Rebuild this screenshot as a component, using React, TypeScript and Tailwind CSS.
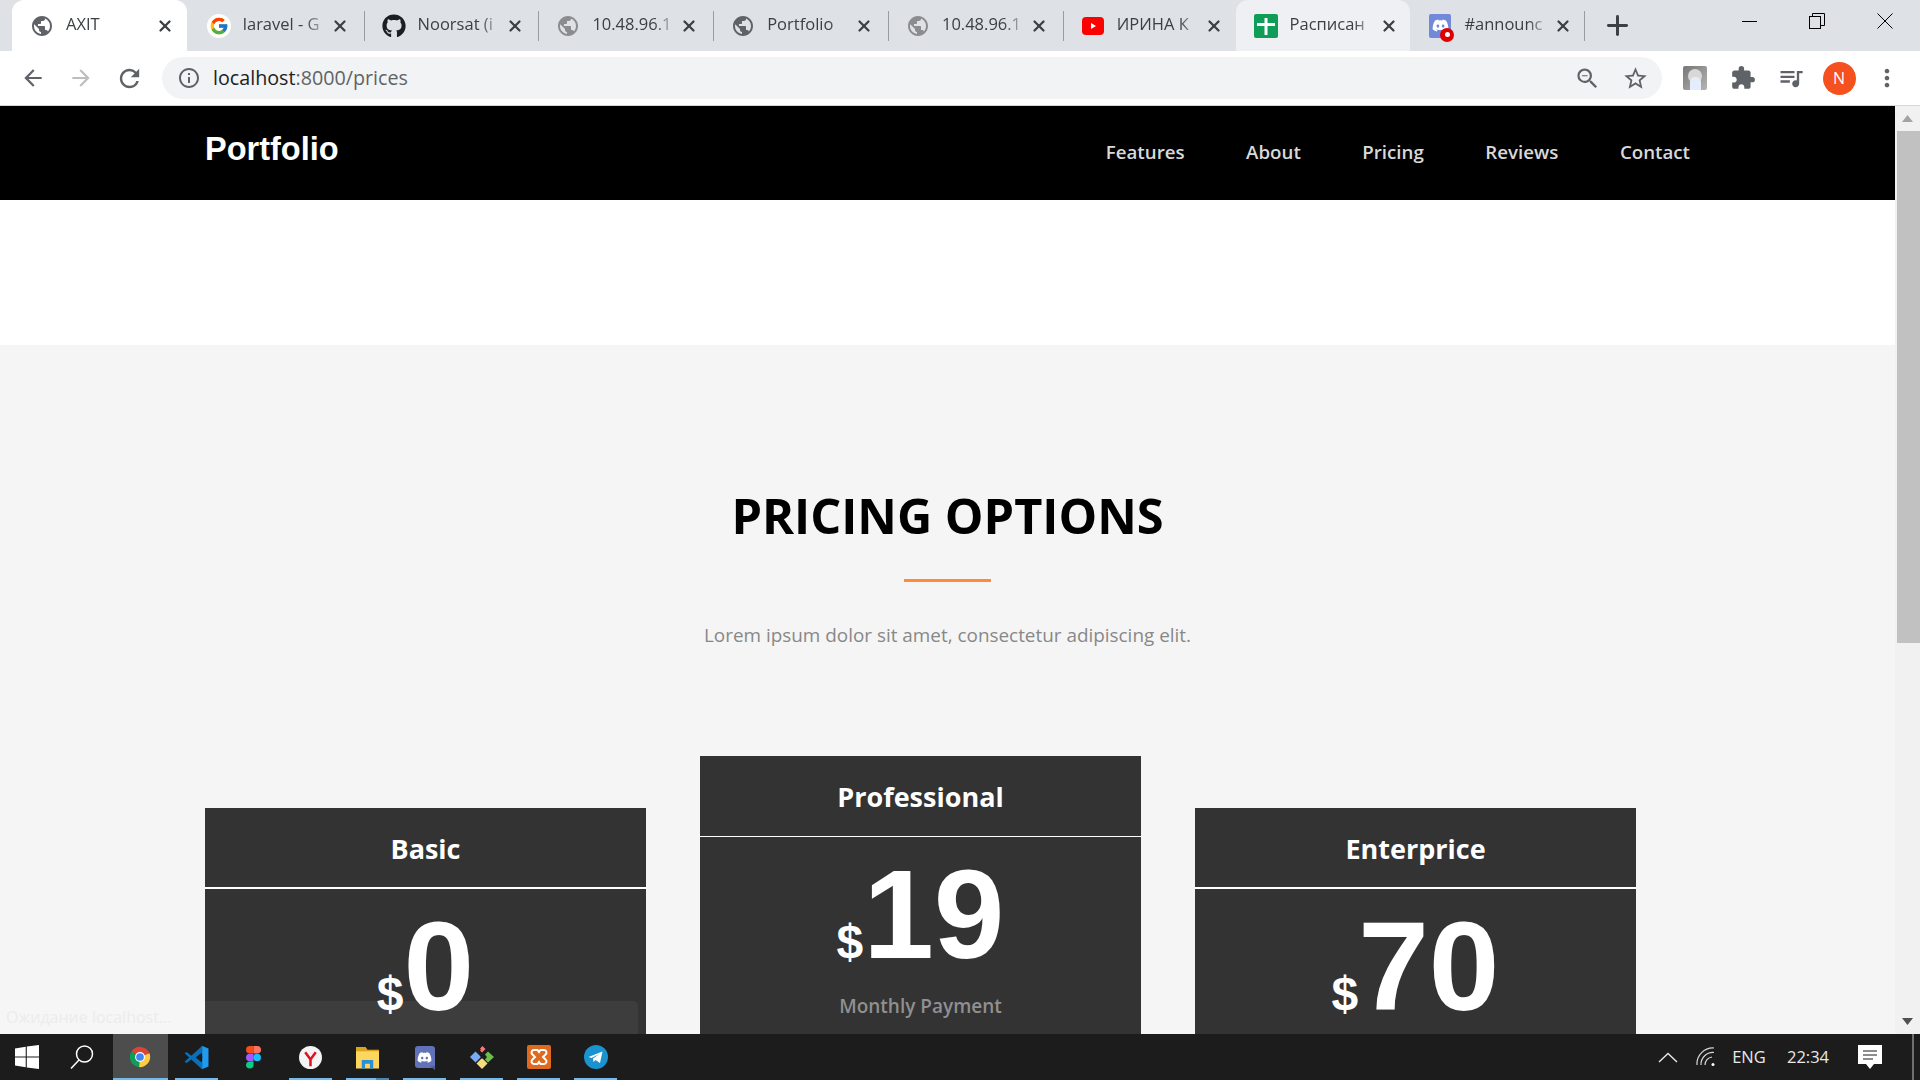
import React from 'react';
import { FaDiscord, FaGithub } from 'react-icons/fa';
import { FcGoogle } from 'react-icons/fc';
import {
  MdArrowBack,
  MdArrowForward,
  MdExtension,
  MdInfoOutline,
  MdMoreVert,
  MdPublic,
  MdQueueMusic,
  MdRefresh,
  MdStarBorder,
  MdZoomOut,
} from 'react-icons/md';
import { Plus, X } from 'lucide-react';

const ui = "font-['Open_Sans',sans-serif]";
const arial = "font-['Liberation_Sans',Arial,sans-serif]";

function YoutubeIcon() {
  return (
    <svg width="22" height="20" viewBox="0 0 22 20">
      <rect x="0" y="1" width="22" height="18" rx="4" fill="#ff0000" />
      <path d="M9 7l5 3-5 3z" fill="#fff" />
    </svg>
  );
}

function SheetsIcon() {
  return (
    <svg width="24" height="24" viewBox="0 0 24 24">
      <rect width="24" height="24" rx="2" fill="#0f9d58" />
      <path d="M3 9h18v3H3zM10.5 4h3v17h-3z" fill="#fff" />
    </svg>
  );
}

function DiscordTabIcon() {
  return (
    <span className="relative flex h-[24px] w-[22px] items-center justify-center rounded-[2px] bg-[#7289da]">
      <FaDiscord size={17} color="#fff" />
      <span className="absolute -bottom-[4px] -right-[3px] flex h-[14px] w-[14px] items-center justify-center rounded-full bg-[#e00000]">
        <span className="h-[5px] w-[5px] rounded-full bg-white" />
      </span>
    </span>
  );
}

function ChromeIcon() {
  return (
    <svg width="22" height="22" viewBox="0 0 24 24" className="mr-[1px]">
      <path d="M12 12L2.8 6A11 11 0 0 1 22.3 8z" fill="#db4437" />
      <path d="M12 12L2.8 6A11 11 0 0 0 11 23z" fill="#0f9d58" />
      <path d="M12 12L22.3 8A11 11 0 0 1 11 23z" fill="#ffcd40" />
      <circle cx="12" cy="12" r="5.4" fill="#fff" />
      <circle cx="12" cy="12" r="4.2" fill="#4285f4" />
    </svg>
  );
}

function VscodeIcon() {
  return (
    <svg width="25" height="25" viewBox="0 0 24 24">
      <path d="M17 0.8L23.5 3.4V20.6L17 23.2L17.6 12z" fill="#1f9cf0" />
      <path d="M17.6 0.6L7 10.2L2.6 6.8L0.5 7.9L5 12L0.5 16.1L2.6 17.2L7 13.8L17.6 23.4L17.8 17.2L11.2 12L17.8 6.8z" fill="#0a6fb8" />
    </svg>
  );
}

function FigmaIcon() {
  return (
    <svg width="15" height="23" viewBox="0 0 15 23">
      <path d="M0 3.8A3.8 3.8 0 0 1 3.8 0H7.5V7.6H3.8A3.8 3.8 0 0 1 0 3.8z" fill="#f24e1e" />
      <path d="M7.5 0H11.2A3.8 3.8 0 0 1 11.2 7.6H7.5z" fill="#ff7262" />
      <path d="M0 11.5A3.8 3.8 0 0 1 3.8 7.7H7.5V15.3H3.8A3.8 3.8 0 0 1 0 11.5z" fill="#a259ff" />
      <circle cx="11.2" cy="11.5" r="3.8" fill="#1abcfe" />
      <path d="M0 19.2A3.8 3.8 0 0 1 3.8 15.4H7.5V19.2A3.8 3.8 0 0 1 0 19.2z" fill="#0acf83" />
    </svg>
  );
}

function YandexIcon() {
  return (
    <svg width="23" height="23" viewBox="0 0 24 24">
      <circle cx="12" cy="12" r="12" fill="#f4f4f4" />
      <path d="M6.5 6.5l5.5 7.5 5.5-7.5M12 14v7" fill="none" stroke="#e3101a" strokeWidth="2.6" />
    </svg>
  );
}

function FilesIcon() {
  return (
    <svg width="23" height="23" viewBox="0 0 24 24">
      <path d="M0 1h10l2 3h12v4H0z" fill="#d9a520" />
      <rect y="5.5" width="24" height="18" fill="#fbd760" />
      <path d="M6 23.5v-9h12v9h-3.500v-5h-5v5z" fill="#2a8fd8" />
    </svg>
  );
}

function DiscordAppIcon() {
  return (
    <span className="relative flex h-[22px] w-[20px] items-center justify-center rounded-[3px] bg-[#6272b8]">
      <FaDiscord size={15} color="#fff" />
      <span className="absolute -bottom-[2px] right-0 h-0 w-0 border-l-[5px] border-t-[4px] border-l-transparent border-t-[#4f5d9e]" />
    </span>
  );
}

function GitIcon() {
  return (
    <svg width="24" height="24" viewBox="0 0 24 24">
      <path d="M5.500 6.500L11 12l-5.500 5.500L0 12z" fill="#79aaf5" />
      <path d="M12.500 1l3 3-3.500 3.500L10 5.500l1-1-1-1z" fill="#f47a7a" />
      <path d="M18 6.500L24 12l-6 5.500-3-3 2-2.500-2-2.500z" fill="#6cc04a" />
      <path d="M12 13l5.500 5.500L12 24l-5.500-5.500z" fill="#f6dc7c" />
      <circle cx="12" cy="12" r="1.500" fill="#1c1c1c" />
    </svg>
  );
}

function XamppIcon() {
  return (
    <svg width="24" height="24" viewBox="0 0 24 24">
      <rect width="24" height="24" rx="2" fill="#dd6a1f" />
      <path d="M7 5h3.500L12 7l1.500-2H17a2.500 2.500 0 0 1 1.500 4.500L16 12l2.500 2.500A2.500 2.500 0 0 1 17 19h-3.500L12 17l-1.500 2H7a2.500 2.500 0 0 1-1.500-4.500L8 12 5.500 9.500A2.500 2.500 0 0 1 7 5z" fill="none" stroke="#fff" strokeWidth="2" />
    </svg>
  );
}

function TelegramIcon() {
  return (
    <svg width="24" height="24" viewBox="0 0 24 24">
      <circle cx="12" cy="12" r="12" fill="#1b93cf" />
      <path d="M4.500 12L18.500 6.500L16 18L11.500 15L9.500 17L9 13.500L15.500 9L7.500 13z" fill="#fff" />
    </svg>
  );
}

const tabs = [
  { title: 'AXIT', icon: <MdPublic size={24} color="#5f6368" />, active: true },
  { title: 'laravel - G', icon: <span className="flex h-[24px] w-[24px] items-center justify-center rounded-full bg-white"><FcGoogle size={20} /></span>, sep: true, nudge: true },
  { title: 'Noorsat (i', icon: <FaGithub size={24} color="#1b1f23" />, sep: true, nudge: true },
  { title: '10.48.96.1', icon: <MdPublic size={24} color="#8a8c8f" />, sep: true, nudge: true },
  { title: 'Portfolio', icon: <MdPublic size={24} color="#5f6368" />, sep: true, nudge: true },
  { title: '10.48.96.1', icon: <MdPublic size={24} color="#8a8c8f" />, sep: true, nudge: true },
  { title: 'ИРИНА К', icon: <YoutubeIcon />, nudge: true },
  { title: 'Расписан', icon: <SheetsIcon />, hovered: true },
  { title: '#announc', icon: <DiscordTabIcon />, sep: true },
];

const apps = [
  { icon: <VscodeIcon />, line: true },
  { icon: <FigmaIcon /> },
  { icon: <YandexIcon />, line: true },
  { icon: <FilesIcon />, line: true, double: true },
  { icon: <DiscordAppIcon />, line: true },
  { icon: <GitIcon />, line: true },
  { icon: <XamppIcon />, line: true },
  { icon: <TelegramIcon />, line: true },
];

const navLinks = ['Features', 'About', 'Pricing', 'Reviews', 'Contact'];

function PriceCard({ name, price, featured }: { name: string; price: string; featured?: boolean }) {
  return (
    <div className={`w-[441px] bg-[#333333] pb-[60px] text-center text-white ${featured ? '' : 'mt-[52px]'}`}>
      <h3 className={`flex h-[81px] items-center justify-center border-white text-[27px] font-bold ${featured ? 'border-b pt-[2px]' : 'border-b-2 pt-[3px]'}`}>
        {name}
      </h3>
      <div className={`flex items-baseline justify-center pt-[14px] font-bold leading-none ${arial}`}>
        <span className="text-[48px]">$</span>
        <span className="text-[127px]">{price}</span>
      </div>
      <p className="mt-[14px] text-[19px] font-semibold leading-[28px] text-[#909090]">Monthly Payment</p>
    </div>
  );
}

export default function App() {
  return (
    <div className={`flex h-screen w-full flex-col overflow-hidden bg-white ${ui}`}>
      {/* tab strip */}
      <div className="flex h-[51px] shrink-0 items-stretch bg-[#dee1e6] pl-[12px]">
        {tabs.map((t, i) => (
          <div
            key={i}
            className={`relative flex w-[174.8px] items-center ${t.nudge ? 'pl-[20px]' : 'pl-[18px]'} ${
              t.active ? 'rounded-t-[12px] bg-white' : t.hovered ? 'rounded-t-[12px] bg-[#eef0f3]' : ''
            }`}
          >
            <span className="flex w-[24px] shrink-0 items-center justify-center">{t.icon}</span>
            <span
              className={`ml-[12px] -mt-[2px] overflow-hidden whitespace-nowrap text-[16.5px] text-[#3c4043] [mask-image:linear-gradient(to_right,black_72%,transparent)] ${
                t.nudge ? 'w-[86px]' : 'w-[88px]'
              }`}
            >
              {t.title}
            </span>
            <X size={18} strokeWidth={3} className="ml-[2px] shrink-0 text-[#3c4043]" />
            {t.sep && (
              <span
                className={`absolute top-[11px] h-[30px] w-[1px] bg-[#9a9ca0] ${i === tabs.length - 1 ? 'right-0' : '-right-[3px]'}`}
              />
            )}
          </div>
        ))}
        <div className="ml-[17px] flex items-center">
          <Plus size={31} strokeWidth={2.3} className="text-[#3c4043]" />
        </div>
        <div className="ml-auto flex items-start pr-[2px]">
          <div className="flex h-[42px] w-[68px] items-center justify-center">
            <span className="h-[1px] w-[15px] bg-black" />
          </div>
          <div className="flex h-[42px] w-[68px] items-center justify-center">
            <svg width="16" height="16" viewBox="0 0 16 16" fill="none" stroke="#000" strokeWidth="1">
              <rect x="0.5" y="3.500" width="11" height="12" />
              <path d="M3.500 3.500V0.500H15.500V12.500H11.500" />
            </svg>
          </div>
          <div className="flex h-[42px] w-[67px] items-center justify-center">
            <svg width="16" height="16" viewBox="0 0 16 16" stroke="#000" strokeWidth="1">
              <path d="M0.500 0.500L15.500 15.500M15.500 0.500L0.500 15.500" />
            </svg>
          </div>
        </div>
      </div>

      {/* toolbar */}
      <div className="flex h-[55px] shrink-0 items-center border-b border-[#d8d8d8] pl-[9px]">
        <span className="flex w-[48px] justify-center"><MdArrowBack size={26} color="#5f6368" /></span>
        <span className="flex w-[48px] justify-center"><MdArrowForward size={26} color="#bcbec0" /></span>
        <span className="flex w-[48px] justify-center"><MdRefresh size={29} color="#5f6368" /></span>
        <div className="ml-[9px] flex h-[42px] w-[1500px] items-center rounded-full bg-[#f1f3f4] pl-[15px] pr-[13px]">
          <MdInfoOutline size={24} color="#5f6368" />
          <span className="ml-[12px] text-[19.7px] text-[#5f6368]">
            <span className="text-[#202124]">localhost</span>:8000/prices
          </span>
          <MdZoomOut size={27} color="#5f6368" className="ml-auto" />
          <MdStarBorder size={27} color="#5f6368" className="ml-[21px]" />
        </div>
        <span className="ml-[9px] flex w-[48px] justify-center">
          <span className="relative flex h-[24px] w-[24px] items-end justify-center overflow-hidden rounded-[2px] bg-gradient-to-br from-[#777777] to-[#b5b5b5]">
            <span className="absolute left-[5px] top-[3px] h-[14px] w-[14px] rounded-full bg-[#d8d8d8]" />
            <span className="relative h-[13px] w-[11px] rounded-t-[5px] bg-[#e4eefa]" />
          </span>
        </span>
        <span className="flex w-[48px] justify-center"><MdExtension size={26} color="#5f6368" /></span>
        <span className="flex w-[48px] justify-center"><MdQueueMusic size={28} color="#5f6368" /></span>
        <span className="flex w-[48px] justify-center">
          <span className="flex h-[33px] w-[33px] items-center justify-center rounded-full bg-[#f4511e] text-[16px] text-white">N</span>
        </span>
        <span className="flex w-[48px] justify-center"><MdMoreVert size={28} color="#5f6368" /></span>
      </div>

      {/* page + scrollbar */}
      <div className="relative flex min-h-0 flex-1">
        <main className="min-w-0 flex-1 overflow-hidden">
          <nav className="flex h-[94px] items-center justify-between bg-black pl-[205px] pr-[205px]">
            <span className={`-mt-[8px] text-[32.5px] font-bold text-white ${arial}`}>Portfolio</span>
            <ul className="-mt-[2px] flex gap-[61.5px] text-[18.72px] font-semibold text-[#d9d9d9]">
              {navLinks.map(l => (
                <li key={l}>{l}</li>
              ))}
            </ul>
          </nav>
          <div className="h-[145px] bg-white" />
          <section className="h-full bg-[#f5f5f5] pt-[140px]">
            <h2 className="text-center text-[48.7px] font-bold leading-[60px] text-black">PRICING OPTIONS</h2>
            <div className="mx-auto mt-[34px] h-[3px] w-[87px] bg-[#ff8a3c]" />
            <p className="mt-[39px] text-center text-[18.9px] leading-[28px] text-[#888888]">
              Lorem ipsum dolor sit amet, consectetur adipiscing elit.
            </p>
            <div className="mt-[107px] flex items-start gap-[54px] pl-[205px]">
              <PriceCard name="Basic" price="0" />
              <PriceCard name="Professional" price="19" featured />
              <PriceCard name="Enterprice" price="70" />
            </div>
          </section>
        </main>

        <div className="flex w-[25px] shrink-0 flex-col bg-[#f1f1f1]">
          <div className="flex h-[25px] items-center justify-center">
            <svg width="11" height="7" viewBox="0 0 11 7"><path d="M5.500 0L11 7H0z" fill="#a3a3a3" /></svg>
          </div>
          <div className="ml-[2px] h-[512px] bg-[#c1c1c1]" />
          <div className="mt-auto flex h-[25px] items-center justify-center">
            <svg width="11" height="7" viewBox="0 0 11 7"><path d="M0 0H11L5.500 7z" fill="#505050" /></svg>
          </div>
        </div>

        {/* loading status bubble */}
        <div className="absolute bottom-0 left-0 flex h-[33px] w-[638px] items-center rounded-tr-[5px] bg-white/5 pb-[2px] pl-[6px] text-[16px] text-[#ececec]">
          Ожидание localhost...
        </div>
      </div>

      {/* windows taskbar */}
      <div className="flex h-[46px] shrink-0 items-stretch bg-[#1c1c1c] text-[#e8e8e8]">
        <div className="flex w-[54px] items-center justify-center">
          <svg width="24" height="24" viewBox="0 0 24 24" fill="#fff">
            <path d="M0 3.400L10.700 1.800V11.400H0zM11.800 1.600L24 0V11.400H11.800zM0 12.600H10.700V22.200L0 20.600zM11.800 12.600H24V24L11.800 22.400z" />
          </svg>
        </div>
        <div className="flex w-[59px] items-center justify-center">
          <svg width="24" height="24" viewBox="0 0 24 24" fill="none" stroke="#fff" strokeWidth="1.500" className="mr-[4px]">
            <circle cx="14.500" cy="9" r="8" />
            <path d="M9 15L1 23.500" />
          </svg>
        </div>
        <div className="relative flex w-[55px] items-center justify-center bg-[#4d4d4d]">
          <ChromeIcon />
          <span className="absolute bottom-0 left-0 h-[2px] w-full bg-[#76b9ed]" />
        </div>
        {apps.map((a, i) => (
          <div key={i} className="relative flex w-[57px] items-center justify-center">
            {a.icon}
            {a.line && <span className="absolute bottom-0 left-[7px] h-[2px] w-[43px] bg-[#76b9ed]" />}
            {a.double && <span className="absolute bottom-0 left-[37px] h-[2px] w-[13px] bg-[#4d87b0]" />}
          </div>
        ))}
        <div className="ml-auto flex items-center">
          <div className="flex w-[40px] justify-center">
            <svg width="20" height="11" viewBox="0 0 20 11" fill="none" stroke="#e8e8e8" strokeWidth="1.400">
              <path d="M1 10L10 1.500L19 10" />
            </svg>
          </div>
          <div className="flex w-[36px] justify-center">
            <svg width="20" height="20" viewBox="0 0 20 20" fill="none" stroke="#d8d8d8" strokeWidth="1.200">
              <path d="M1 18A16 16 0 0 1 18 1" />
              <path d="M5 18A12 12 0 0 1 18 5.500" />
              <path d="M9 18A8 8 0 0 1 16 10" />
              <circle cx="17" cy="17.500" r="1.500" fill="#fff" stroke="none" />
            </svg>
          </div>
          <div className="w-[50px] text-center text-[16.5px]">ENG</div>
          <div className="w-[68px] text-center text-[16.5px]">22:34</div>
          <div className="flex w-[56px] justify-center">
            <svg width="24" height="24" viewBox="0 0 24 24">
              <path d="M0 0H24V19H16L12 24L8 19H0z" fill="#fff" />
              <path d="M5 6H19M5 10H19M5 14H15" stroke="#1c1c1c" strokeWidth="1.200" />
            </svg>
          </div>
          <div className="ml-[14px] mr-[6px] h-full w-[2px] bg-[#6e6e6e]" />
        </div>
      </div>
    </div>
  );
}
